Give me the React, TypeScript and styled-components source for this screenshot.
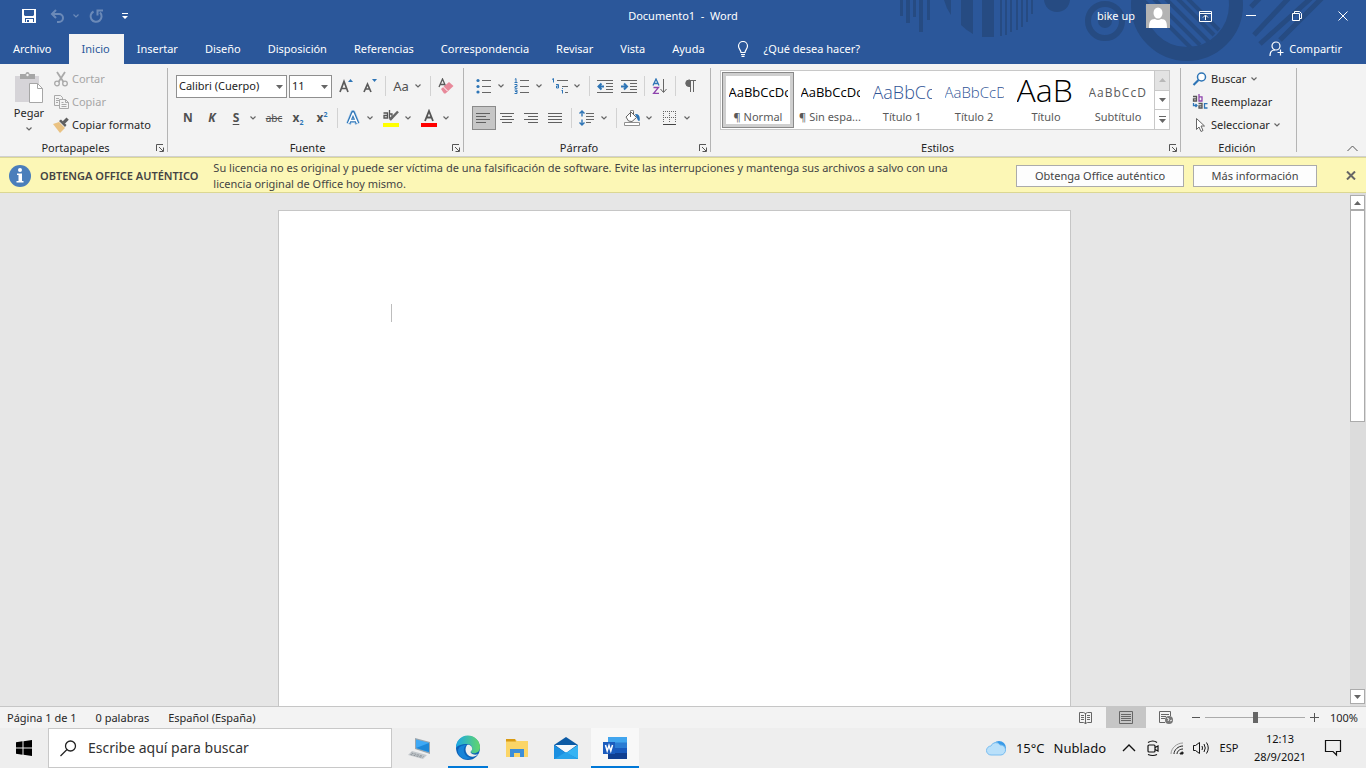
import React from "react";
import styled, { createGlobalStyle, css } from "styled-components";

const GlobalStyle = createGlobalStyle`
  * { box-sizing: border-box; }
  body { margin: 0; font-family: "Noto Sans", "Open Sans", sans-serif; font-size: 11px; line-height: 16px; color: #262626; }
  button, input, select { font: inherit; color: inherit; }
  button { background: none; border: 0; padding: 0; white-space: nowrap; }
  svg { display: block; flex: none; }
`;

const Window = styled.div`
  min-height: 100vh;
  display: flex;
  flex-direction: column;
  background: #e6e6e6;
`;

/* ---------- Title bar and tabs ---------- */
const Header = styled.header`
  position: relative;
  background: #2b579a;
  color: #fff;
  overflow: hidden;
`;
const HeaderArt = styled.svg`
  position: absolute;
  top: 0;
  right: 0;
`;
const TitleBar = styled.div`
  position: relative;
  display: grid;
  grid-template-columns: 1fr auto 1fr;
  align-items: center;
  height: 34px;
  padding-bottom: 2px;
`;
const QuickAccess = styled.div`
  display: flex;
  align-items: center;
  padding-left: 21px;
`;
const QuickButton = styled.button<{ $w: number; $dim?: boolean }>`
  width: ${(p) => p.$w}px;
  height: 24px;
  display: flex;
  align-items: center;
  opacity: ${(p) => (p.$dim ? 0.3 : 1)};
`;
const DocTitle = styled.span`
  white-space: pre;
`;
const Account = styled.div`
  display: flex;
  align-items: center;
  justify-content: flex-end;
`;
const UserName = styled.span`
  margin-right: 11px;
`;
const WindowButton = styled.button`
  width: 46px;
  height: 30px;
  display: grid;
  place-items: center;
`;
const WindowButtons = styled.div`
  display: flex;
  margin-left: 12px;
`;
const TabRow = styled.nav`
  position: relative;
  display: flex;
  height: 30px;
`;
const Tab = styled.button<{ $active?: boolean }>`
  padding: 0 14px 0 13px;
  height: 30px;
  ${(p) => p.$active && css`background: #f3f3f3; color: #2b579a;`}
  &:first-child { padding-right: 17px; }
`;
const TellMe = styled.button`
  display: flex;
  align-items: center;
  gap: 15px;
  margin-left: 18px;
`;
const Share = styled.button`
  display: flex;
  align-items: center;
  gap: 5px;
  margin-left: auto;
  margin-right: 24px;
`;

/* ---------- Ribbon ---------- */
const Ribbon = styled.section`
  display: flex;
  height: 93px;
  padding: 4px 0;
  background: #f3f3f3;
  border-bottom: 1px solid #d0d0d0;
`;
const Group = styled.section<{ $w: number }>`
  flex: none;
  width: ${(p) => p.$w}px;
  display: flex;
  flex-direction: column;
  border-right: 1px solid #b4b4b4;
`;
const GroupBody = styled.div`
  flex: 1;
  padding-left: 8px;
`;
const GroupFooter = styled.footer`
  display: flex;
  align-items: center;
  height: 16px;
  margin-bottom: -4px;
  padding-right: 3px;
`;
const GroupLabel = styled.span`
  flex: 1;
  text-align: center;
`;
const LauncherButton = styled.button`
  width: 13px;
  display: flex;
  justify-content: flex-end;
`;
const Clipboard = styled.div`
  display: flex;
`;
const PasteButton = styled.button`
  width: 42px;
  padding-top: 3px;
  display: flex;
  flex-direction: column;
  align-items: center;
`;
const PasteLabel = styled.span`
  line-height: 17px;
  margin-bottom: 5px;
`;
const CommandList = styled.div`
  display: flex;
  flex-direction: column;
  align-items: flex-start;
  padding-left: 3px;
`;
const Command = styled.button<{ $dim?: boolean }>`
  display: flex;
  align-items: center;
  gap: 3px;
  height: 23px;
  padding-bottom: 2px;
  color: ${(p) => (p.$dim ? "#a6a6a6" : "#262626")};
`;
const ToolRow = styled.div<{ $tall?: boolean }>`
  display: flex;
  align-items: center;
  height: ${(p) => (p.$tall ? 36 : 27)}px;
`;
const Tool = styled.button<{ $on?: boolean }>`
  width: 24px;
  height: 24px;
  display: grid;
  place-items: center;
  color: #505050;
  ${(p) => p.$on && css`background: #c6c6c6; border: 1px solid #8a8a8a;`}
`;
const Letter = styled.span<{ $kind?: string }>`
  font-size: 12px;
  font-weight: 700;
  ${(p) => p.$kind === "italic" && css`font-style: italic;`}
  ${(p) => p.$kind === "under" && css`text-decoration: underline; text-underline-offset: 2px;`}
  ${(p) => p.$kind === "strike" && css`font-size: 10px; font-weight: 400; text-decoration: line-through;`}
  ${(p) => p.$kind === "plain" && css`font-size: 13px; font-weight: 400;`}
  sub, sup { font-size: 7px; line-height: 0; color: #2e75b6; }
`;
const DropButton = styled.button`
  width: 14px;
  height: 24px;
  display: flex;
  align-items: center;
  padding-left: 1px;
`;
const Divider = styled.span`
  width: 1px;
  height: 20px;
  margin: 0 3px;
  background: #d2d2d2;
`;
const SelectBox = styled.label<{ $w: number }>`
  position: relative;
  flex: none;
  width: ${(p) => p.$w}px;
  height: 23px;
  margin-right: 2px;
  svg { position: absolute; right: 4px; top: 10px; }
`;
const Select = styled.select`
  appearance: none;
  width: 100%;
  height: 23px;
  padding: 0 2px;
  border: 1px solid #8f8f8f;
  border-radius: 0;
  background: #fff;
  color: #222;
`;
const Gallery = styled.div`
  display: flex;
  height: 60px;
  margin: 2px 10px 0 1px;
  border: 1px solid #c8c8c8;
  background: #fff;
`;
const StyleCard = styled.button<{ $on?: boolean }>`
  width: 72px;
  height: 56px;
  margin-top: 1px;
  display: flex;
  flex-direction: column;
  align-items: center;
  overflow: hidden;
  &:first-child { margin-left: 1px; }
  ${(p) => p.$on && css`box-shadow: inset 0 0 0 1px #8a8a8a, inset 0 0 0 4px #cfcfcf;`}
`;
const Sample = styled.span<{ $size: number; $color: string; $light?: boolean; $spaced?: boolean }>`
  width: 59px;
  height: 29px;
  margin-top: 6px;
  line-height: ${(p) => (p.$size > 20 ? 24 : 29)}px;
  overflow: hidden;
  text-align: left;
  font-family: "Open Sans", sans-serif;
  font-size: ${(p) => p.$size}px;
  font-weight: ${(p) => (p.$light ? 300 : 400)};
  color: ${(p) => p.$color};
  letter-spacing: ${(p) => (p.$spaced ? 1 : 0)}px;
`;
const StyleName = styled.span`
  margin-top: 2px;
  line-height: 15px;
  color: #595959;
`;
const GalleryScroll = styled.div`
  display: flex;
  flex-direction: column;
  width: 15px;
  margin-left: auto;
  border-left: 1px solid #c8c8c8;
`;
const GalleryButton = styled.button<{ $off?: boolean }>`
  flex: 1;
  display: grid;
  place-items: center;
  background: ${(p) => (p.$off ? "#e3e3e3" : "#fff")};
  & + & { border-top: 1px solid #c8c8c8; }
`;
const Collapse = styled.button`
  align-self: flex-end;
  margin-left: auto;
  margin-right: 8px;
`;

/* ---------- License notice ---------- */
const Notice = styled.aside`
  display: flex;
  align-items: center;
  height: 36px;
  padding: 1px 10px 0 9px;
  background: #fcf7b6;
  border-top: 1px solid #dbd793;
  border-bottom: 1px solid #dbd793;
  color: #444;
`;
const NoticeTitle = styled.strong`
  margin: 0 15px 0 9px;
  font-weight: 600;
  white-space: nowrap;
`;
const NoticeText = styled.p`
  flex: 1;
  max-width: 755px;
  margin: 0;
`;
const NoticeActions = styled.div`
  display: flex;
  align-items: center;
  margin-left: auto;
`;
const NoticeButton = styled.button<{ $w: number }>`
  width: ${(p) => p.$w}px;
  height: 22px;
  margin-right: 9px;
  border: 1px solid #ababab;
  background: #fdfdfd;
`;
const NoticeClose = styled.button`
  margin-left: 20px;
`;

/* ---------- Document ---------- */
const Workspace = styled.main`
  flex: 1;
  display: flex;
  min-height: 0;
`;
const Desk = styled.div`
  flex: 1;
  display: flex;
  justify-content: center;
  padding: 17px 1px 0 0;
`;
const Sheet = styled.article`
  width: 793px;
  padding: 93px 112px 0;
  background: #fff;
  border: 1px solid #c6c6c6;
  border-bottom: 0;
`;
const Caret = styled.div`
  width: 1px;
  height: 18px;
  background: #bdbdbd;
`;
const Scrollbar = styled.div`
  width: 16px;
  display: flex;
  flex-direction: column;
  padding: 2px 1px 2px 0;
  background: #dcdcdc;
`;
const ScrollButton = styled.button`
  height: 15px;
  display: grid;
  place-items: center;
  border: 1px solid #ababab;
  background: #fff;
`;
const ScrollThumb = styled.div`
  height: 212px;
  margin-bottom: auto;
  border: 1px solid #ababab;
  background: #fff;
`;

/* ---------- Status bar ---------- */
const StatusBar = styled.footer`
  display: flex;
  align-items: center;
  height: 22px;
  padding: 0 8px 0 7px;
  border-top: 1px solid #c6c6c6;
  background: #f3f3f3;
`;
const StatusItem = styled.span`
  margin-right: 19px;
`;
const ViewButton = styled.button<{ $on?: boolean }>`
  width: 40px;
  height: 21px;
  display: grid;
  place-items: center;
  background: ${(p) => (p.$on ? "#c6c6c6" : "transparent")};
`;
const Views = styled.div`
  display: flex;
  margin-left: auto;
`;
const ZoomControl = styled.div`
  display: flex;
  align-items: center;
  gap: 5px;
  margin-left: 5px;
`;
const ZoomRange = styled.input`
  appearance: none;
  width: 100px;
  height: 12px;
  margin: 0;
  background: linear-gradient(#ababab, #ababab) center / 100% 1px no-repeat;
  &::-webkit-slider-thumb { appearance: none; width: 5px; height: 11px; background: #666; }
`;
const ZoomValue = styled.button`
  width: 34px;
  text-align: right;
`;

/* ---------- Taskbar ---------- */
const Taskbar = styled.footer`
  display: flex;
  align-items: center;
  height: 40px;
  background: #eeeeee;
  color: #111;
`;
const StartButton = styled.button`
  width: 48px;
  height: 40px;
  display: grid;
  place-items: center;
`;
const SearchBox = styled.label`
  display: flex;
  align-items: center;
  gap: 11px;
  width: 344px;
  height: 40px;
  padding: 0 11px;
  border: 1px solid #c8c8c8;
  background: #fff;
`;
const SearchInput = styled.input`
  flex: 1;
  min-width: 0;
  padding: 0;
  border: 0;
  outline: 0;
  font-size: 14px;
  line-height: 20px;
  background: none;
  &::placeholder { color: #333; opacity: 1; }
`;
const Pinned = styled.div`
  display: flex;
  margin-left: 3px;
`;
const AppButton = styled.button<{ $state?: "open" | "active" }>`
  width: 48px;
  height: 40px;
  margin-right: 1px;
  display: grid;
  place-items: center;
  background: ${(p) => (p.$state === "active" ? "#f8f8f8" : "transparent")};
  ${(p) => p.$state === "active" && css`border-top: 2px solid transparent; border-bottom: 2px solid #0078d7;`}
  ${(p) => p.$state === "open" && css`
    background: linear-gradient(#0078d7, #0078d7) bottom / 40px 2px no-repeat;
  `}
`;
const Tray = styled.div`
  display: flex;
  align-items: center;
  margin-left: auto;
  padding-right: 24px;
`;
const Weather = styled.button`
  display: flex;
  align-items: center;
  gap: 9px;
  margin-right: 15px;
  font-size: 13px;
`;
const TrayIcons = styled.div`
  display: flex;
  align-items: center;
  gap: 7px;
`;
const Language = styled.button`
  width: 38px;
  margin-right: 2px;
`;
const Clock = styled.time`
  width: 60px;
  line-height: 18px;
  text-align: center;
  margin-right: 14px;
`;

/* ---------- Icons ---------- */
const Chevron = ({ color = "#666" }: { color?: string }) => (
  <svg width="8" height="6" viewBox="0 0 8 6" fill="none" stroke={color} strokeWidth="1.2"><path d="M1.5 1.5 4 4l2.500-2.500" /></svg>
);
const Triangle = ({ up, color = "#666" }: { up?: boolean; color?: string }) => (
  <svg width="7" height="4" viewBox="0 0 7 4" fill={color}><path d={up ? "M0 4h7L3.500 0z" : "M0 0h7L3.500 4z"} /></svg>
);
const Launcher = () => (
  <svg width="8" height="8" viewBox="0 0 8 8" fill="none" stroke="#555"><path d="M.5 7V.5H7M3 3l4 4M7.500 3.500v4h-4" /></svg>
);
const Svg16 = ({ children, w = 16, h = 16 }: { children: React.ReactNode; w?: number; h?: number }) => (
  <svg width={w} height={h} viewBox={`0 0 ${w} ${h}`} fill="none" stroke="#666">{children}</svg>
);
const SaveIcon = () => (
  <svg width="16" height="16" viewBox="0 0 16 16"><path d="M1 1h14v14H1z" fill="#fff" /><path d="M3 2h10v5l-1 1H4L3 7zM4 10h9v4h-1v-3H5v3H4z" fill="#2b579a" /><path d="M6 12h2v2H6z" fill="#2b579a" /></svg>
);
const AlignIcon = ({ rows }: { rows: [number, number][] }) => (
  <Svg16>
    {rows.map(([x, w], i) => <path key={i} d={`M${x} ${3.5 + i * 3}h${w}`} stroke="#606060" />)}
  </Svg16>
);
const ListIcon = () => (
  <Svg16>
    <path d="M6 2.500h9M6 8.500h9M6 14.500h9" />
    <g fill="#2e75b6" stroke="none"><circle cx="2" cy="2.500" r="1.600" /><circle cx="2" cy="8.500" r="1.600" /><circle cx="2" cy="14" r="1.600" /></g>
  </Svg16>
);
const NumberIcon = () => (
  <Svg16>
    <path d="M6 2.500h9M6 8.500h9M6 14.500h9" />
    <path d="M.8 1.500 2 .5V4.500M.5 4.500H3.500M.5 6.500h2.500v2h-2v1.800h2.500M.5 12h2.500v1.500h-2M3 13.500V15.500H.5" stroke="#2e75b6" />
  </Svg16>
);
const MultiIcon = () => (
  <Svg16>
    <path d="M5 2.500h11M10 8.500h6M13 14.500h3" />
    <path d="M0 1.500 1.500.5v4M4 6.500h2.500v3.500H4.500v-2h2M10.500 10v1M10.500 12v3.500M9.500 12.500h1" stroke="#2e75b6" />
  </Svg16>
);
const IndentIcon = ({ out }: { out?: boolean }) => (
  <Svg16>
    <path d="M0 2.500h16M9 5.500h7M9 8.500h7M9 11.500h7M0 14.500h16" />
    <path d={out ? "M7 8.500H1.500M4.500 5.500l-3 3 3 3" : "M0 8.500h6M3 5.500l3 3-3 3"} stroke="#2e75b6" strokeWidth="2" />
  </Svg16>
);
const GrowIcon = ({ down }: { down?: boolean }) => (
  <svg width="16" height="16" viewBox="0 0 16 16">
    <path d={down ? "M2 14 5.500 6 9 14M3.500 11h4" : "M2 14 6 3.500 10 14M3.500 10.500h5"} fill="none" stroke="#5a5a5a" strokeWidth="1.700" />
    <path d={down ? "M10 1h5l-2.500 3z" : "M10 4h5l-2.500-3z"} fill="#2e75b6" />
  </svg>
);
const PasteIcon = () => (
  <svg width="30" height="33" viewBox="0 0 30 33">
    <path d="M1 5h24v26H1z" fill="#d6d4d8" /><path d="M6 3h5.500a2 2 0 0 1 4 0H21v5H6z" fill="#a6a6a6" /><circle cx="13.500" cy="4" r="1.200" fill="#f3f3f3" />
    <path d="M15.500 12.500h8l5 5v14h-13z" fill="#fff" stroke="#a6a6a6" /><path d="M23.500 12.500v5h5" fill="none" stroke="#a6a6a6" />
  </svg>
);
const CutIcon = () => (
  <Svg16><g stroke="#a9a9a9" strokeWidth="1.800"><path d="m4 1 6.500 10M12 1 5.500 11" /><circle cx="4" cy="12.500" r="2.300" strokeWidth="1.300" /><circle cx="12" cy="12.500" r="2.300" strokeWidth="1.300" /></g></Svg16>
);
const CopyIcon = () => (
  <Svg16><g stroke="#a9a9a9" fill="#f3f3f3"><path d="M1.500 1.500h6l2 2v8h-8zM3 4.500h3M3 6.500h3M3 8.500h2" /><path d="M6.500 5.500h6l3 3v6h-9zM12.500 5.500v3h3M8.500 8.500h2M8.500 10.500h5M8.500 12.500h5" /></g></Svg16>
);
const BrushIcon = () => (
  <svg width="16" height="16" viewBox="0 0 16 16"><path d="M0 7 6 5l6 6-5 5z" fill="#eac282" /><path d="m6 4 2-1.500 5.500 5.500-1.500 2z" fill="#5f5f5f" /><path d="m9.500 4.500 4-4 2.300 2.300-4 4z" fill="#5f5f5f" /></svg>
);
const EraserIcon = () => (
  <svg width="16" height="16" viewBox="0 0 16 16"><path d="M1 9 4.500 1 8 9M2 6.500h5" fill="none" stroke="#5a5a5a" strokeWidth="1.300" /><path d="m3 11 8-7 4.500 4-8 7.500H6z" fill="#e8899a" /><path d="m5.500 9 4 4" stroke="#fff" /></svg>
);
const EffectIcon = () => (
  <svg width="16" height="16" viewBox="0 0 16 16" fill="none" strokeLinejoin="round"><path d="M3.500 14 8 2.500 12.500 14M5 10.500h6" stroke="#a9cbea" strokeWidth="5" /><path d="M3.500 13.500 8 2.500l4.500 11M5 10.500h6" stroke="#2e75b6" strokeWidth="3.600" /><path d="M3.500 13.500 8 3l4.500 10.500M5 10.500h6" stroke="#fff" strokeWidth="1.500" /></svg>
);
const HighlightIcon = () => (
  <svg width="16" height="18" viewBox="0 0 16 18" fill="none"><path d="M.5 4h4v5H1V6.500h3.500M6.500 1v8H9V5H6.500" stroke="#555" strokeWidth="1.300" /><path d="m7 11 8-8.500" stroke="#666" strokeWidth="2.500" /><path d="M0 14h16v4H0z" fill="#ff0" /></svg>
);
const FontColorIcon = () => (
  <svg width="16" height="18" viewBox="0 0 16 18" fill="none"><path d="M4 12 8 2l4 10M5.500 8.500h5" stroke="#555" strokeWidth="1.800" /><path d="M0 14h16v4H0z" fill="red" /></svg>
);
const SortIcon = () => (
  <Svg16><path d="M1 7.500 4 1l3 6.500M2 5.500h4" stroke="#2e75b6" strokeWidth="1.300" /><path d="M1.500 9.500h5l-5 6h5.500" stroke="#8e44ad" strokeWidth="1.300" /><path d="M11.500 1v13M8.500 11l3 3.500 3-3.500" /></Svg16>
);
const PilcrowIcon = () => (
  <Svg16><path d="M7.500 2v12M10.500 2v12M13 2.500H6" /><path d="M7 2H6a3 3 0 0 0 0 6.500h1z" fill="#666" /></Svg16>
);
const SpacingIcon = () => (
  <Svg16><path d="M7 3.500h8M7 6.500h8M7 9.500h8M7 12.500h5" /><path d="M3 1.500v5M.5 3.500 3 1l2.500 2.500M3 14.500v-5M.5 12.500 3 15l2.500-2.500" stroke="#2e75b6" strokeWidth="1.400" /></Svg16>
);
const BucketIcon = () => (
  <Svg16><path d="m2 7 5-5 5.500 5.500-4.500 4-3.500-.5zM6.500 7V1.500a1.500 1.500 0 0 1 3 0V4" fill="#fff" /><path d="M11 4c4-.5 5.500 3 4.500 7-2 0-2-2-3-4z" fill="#2e75b6" stroke="none" /><path d="M.5 12.500h15v3H.5z" fill="#fff" stroke="#909090" /></Svg16>
);
const BorderIcon = () => (
  <Svg16><path d="M1.500 1v12M7.500 1v12M13.500 1v12M1 1.500h13M1 7.500h13" strokeDasharray="1 1" /><path d="M1 14.500h13" stroke="#444" /></Svg16>
);
const FindIcon = () => (
  <Svg16><circle cx="9.500" cy="6" r="4" stroke="#2e75b6" strokeWidth="1.500" fill="#fff" /><path d="m6.500 9-5 5" stroke="#2e75b6" strokeWidth="2.200" /></Svg16>
);
const ReplaceIcon = () => (
  <Svg16><g strokeWidth="1.300"><path d="M1 2.500h3.500V7H1.500V4.800H4.500" stroke="#555" /><path d="M7 0v7h3V2.800H7" stroke="#8e44ad" /><path d="M6.500 9.500H10V14H7V11.800h3" stroke="#555" /><path d="M15.500 9.700h-3V14h3M1.500 9v2.500H5M3.500 10 5 11.500 3.500 13" stroke="#2e75b6" /></g></Svg16>
);
const PointerIcon = () => (
  <Svg16><path d="M4.500 1.500v11l2.500-2.500 2 4.500 2-1-2-4.500h3.500z" fill="#fff" /></Svg16>
);

const RibbonGroup = ({ label, width, launcher, children }: { label: string; width: number; launcher?: boolean; children: React.ReactNode }) => (
  <Group $w={width} aria-label={label}>
    <GroupBody>{children}</GroupBody>
    <GroupFooter>
      <GroupLabel>{label}</GroupLabel>
      {launcher && <LauncherButton aria-label={`Opciones de ${label}`}><Launcher /></LauncherButton>}
    </GroupFooter>
  </Group>
);
const Drop = ({ label }: { label: string }) => <DropButton aria-label={label}><Chevron /></DropButton>;

const tabs = ["Archivo", "Inicio", "Insertar", "Diseño", "Disposición", "Referencias", "Correspondencia", "Revisar", "Vista", "Ayuda"];
const styleCards = [
  { name: "¶ Normal", sample: "AaBbCcDc", size: 13, color: "#000", on: true },
  { name: "¶ Sin espa...", sample: "AaBbCcDc", size: 13, color: "#000" },
  { name: "Título 1", sample: "AaBbCc", size: 18, color: "#2f5496", light: true },
  { name: "Título 2", sample: "AaBbCcD", size: 15, color: "#2f5496", light: true },
  { name: "Título", sample: "AaB", size: 32, color: "#000", light: true },
  { name: "Subtítulo", sample: "AaBbCcD", size: 12, color: "#5a5a5a", spaced: true },
];

export default function App() {
  return (
    <Window>
      <GlobalStyle />
      <Header>
        <HeaderArt width="470" height="64" viewBox="896 0 470 64" fill="#264b82" aria-hidden="true">
          <path d="M900 0h3v16h-3zM906 0h4v23h-4zM913 0h3v17h-3zM919 0h4v32h-4zM927 0h3v20h-3zM944 0h7v15q-5-7-7-15zM961 0h12v34q-7-4-12-9zM982 0h12v37h-12zM1000 0h2v36h-2zM1005 0h2v35h-2zM1010 0h2v32h-2zM1016 0h2v30h-2zM1021 0h2v27h-2zM1026 0h2v22h-2zM1031 0h2v14h-2z" />
          <circle cx="1057" cy="-1" r="13" />
          <circle cx="1105" cy="21" r="17" fill="none" stroke="#264b82" strokeWidth="6" /><circle cx="1105" cy="21" r="7" />
          <circle cx="1187" cy="5" r="49" fill="none" stroke="#264b82" strokeWidth="14" />
          <g stroke="#264b82" strokeWidth="4"><path d="m1143 0 48 48M1152-3l48 48M1161-6l49 49M1170-9l44 44M1180-9l39 39" /><path d="m1285-28-34 35M1302-16l-48 51M1320-10l-60 54M1335-15l-55 55" strokeWidth="5" /></g>
        </HeaderArt>
        <TitleBar>
          <QuickAccess>
            <QuickButton $w={29} aria-label="Guardar"><SaveIcon /></QuickButton>
            <QuickButton $w={22} $dim aria-label="Deshacer"><svg width="16" height="14" viewBox="0 0 16 14" fill="none" stroke="#fff" strokeWidth="2"><path d="M6 1 2 5l4 4M2 5h7a4 4 0 0 1 0 8H7" /></svg></QuickButton>
            <QuickButton $w={17} $dim aria-label="Lista de deshacer"><Chevron color="#fff" /></QuickButton>
            <QuickButton $w={32} $dim aria-label="Repetir"><svg width="15" height="15" viewBox="0 0 15 15" fill="none" stroke="#fff" strokeWidth="2"><path d="M4.500 2.500A5.500 5.500 0 1 0 11 3.500M8.500 6.500V1.500H14" /></svg></QuickButton>
            <QuickButton $w={10} aria-label="Personalizar barra"><svg width="8" height="8" viewBox="0 0 8 8" fill="#fff"><path d="M1 1h6v1H1zM1 4h6L4 7z" /></svg></QuickButton>
          </QuickAccess>
          <DocTitle>{"Documento1  -  Word"}</DocTitle>
          <Account>
            <UserName>bike up</UserName>
            <svg width="24" height="24" viewBox="0 0 24 24"><path d="M0 0h24v24H0z" fill="#b3b3b3" /><ellipse cx="12" cy="9" rx="4.500" ry="5.500" fill="#fff" /><path d="M3 24c0-6 1-9 6-9q3 2 6 0c5 0 6 3 6 9z" fill="#fff" /></svg>
            <WindowButtons>
              <WindowButton aria-label="Opciones de la cinta"><svg width="13" height="11" viewBox="0 0 13 11" fill="none" stroke="#fff"><path d="M.5.5h12v10H.5zM.5 2.500h12M6.500 9V4.500M4 6.500l2.500-2.500L9 6.500" /></svg></WindowButton>
              <WindowButton aria-label="Minimizar"><svg width="10" height="2" viewBox="0 0 10 2"><path d="M0 0h10v1H0z" fill="#fff" /></svg></WindowButton>
              <WindowButton aria-label="Restaurar"><svg width="10" height="10" viewBox="0 0 10 10" fill="none" stroke="#fff"><path d="M.5 2.500h7v7h-7zM2.500 2.500v-2h5l2 2v5h-2" /></svg></WindowButton>
              <WindowButton aria-label="Cerrar"><svg width="10" height="10" viewBox="0 0 10 10" stroke="#fff"><path d="m.5.5 9 9M9.500.5l-9 9" /></svg></WindowButton>
            </WindowButtons>
          </Account>
        </TitleBar>
        <TabRow>
          {tabs.map((t) => <Tab key={t} $active={t === "Inicio"}>{t}</Tab>)}
          <TellMe>
            <svg width="12" height="16" viewBox="0 0 12 16" fill="none" stroke="#fff" strokeWidth="1.200"><path d="M4 11.500C4 9 1.500 8 1.500 5a4.500 4.500 0 0 1 9 0c0 3-2.500 4-2.500 6.500zM4 13.500h4M4.500 15.300h3" /></svg>
            ¿Qué desea hacer?
          </TellMe>
          <Share>
            <svg width="15" height="16" viewBox="0 0 15 16" fill="none" stroke="#fff" strokeWidth="1.200"><circle cx="7" cy="5" r="4" /><path d="M1 15c0-4 2-6 5-6M11.500 8.500v6M8.500 11.500h6" /></svg>
            Compartir
          </Share>
        </TabRow>
      </Header>

      <Ribbon>
        <RibbonGroup label="Portapapeles" width={168} launcher>
          <Clipboard>
            <PasteButton><PasteIcon /><PasteLabel>Pegar</PasteLabel><Chevron /></PasteButton>
            <CommandList>
              <Command $dim><CutIcon />Cortar</Command>
              <Command $dim><CopyIcon />Copiar</Command>
              <Command><BrushIcon />Copiar formato</Command>
            </CommandList>
          </Clipboard>
        </RibbonGroup>
        <RibbonGroup label="Fuente" width={296} launcher>
          <ToolRow $tall>
            <SelectBox $w={111}><Select aria-label="Fuente"><option>Calibri (Cuerpo)</option></Select><Triangle /></SelectBox>
            <SelectBox $w={43}><Select aria-label="Tamaño de fuente"><option>11</option></Select><Triangle /></SelectBox>
            <Tool aria-label="Aumentar tamaño"><GrowIcon /></Tool>
            <Tool aria-label="Disminuir tamaño"><GrowIcon down /></Tool>
            <Divider />
            <Tool><Letter $kind="plain">Aa</Letter></Tool><Drop label="Cambiar mayúsculas" />
            <Divider />
            <Tool aria-label="Borrar formato"><EraserIcon /></Tool>
          </ToolRow>
          <ToolRow>
            <Tool><Letter>N</Letter></Tool>
            <Tool><Letter $kind="italic">K</Letter></Tool>
            <Tool><Letter $kind="under">S</Letter></Tool><Drop label="Tipo de subrayado" />
            <Tool><Letter $kind="strike">abc</Letter></Tool>
            <Tool><Letter>x<sub>2</sub></Letter></Tool>
            <Tool><Letter>x<sup>2</sup></Letter></Tool>
            <Divider />
            <Tool aria-label="Efectos de texto"><EffectIcon /></Tool><Drop label="Más efectos" />
            <Tool aria-label="Resaltado"><HighlightIcon /></Tool><Drop label="Más resaltados" />
            <Tool aria-label="Color de fuente"><FontColorIcon /></Tool><Drop label="Más colores" />
          </ToolRow>
        </RibbonGroup>
        <RibbonGroup label="Párrafo" width={247} launcher>
          <ToolRow $tall>
            <Tool aria-label="Viñetas"><ListIcon /></Tool><Drop label="Más viñetas" />
            <Tool aria-label="Numeración"><NumberIcon /></Tool><Drop label="Más numeración" />
            <Tool aria-label="Lista multinivel"><MultiIcon /></Tool><Drop label="Más listas" />
            <Divider />
            <Tool aria-label="Disminuir sangría"><IndentIcon out /></Tool>
            <Tool aria-label="Aumentar sangría"><IndentIcon /></Tool>
            <Divider />
            <Tool aria-label="Ordenar"><SortIcon /></Tool>
            <Divider />
            <Tool aria-label="Mostrar todo"><PilcrowIcon /></Tool>
          </ToolRow>
          <ToolRow>
            <Tool $on aria-label="Alinear a la izquierda"><AlignIcon rows={[[0, 14], [0, 10], [0, 14], [0, 10]]} /></Tool>
            <Tool aria-label="Centrar"><AlignIcon rows={[[0, 14], [2, 10], [0, 14], [2, 10]]} /></Tool>
            <Tool aria-label="Alinear a la derecha"><AlignIcon rows={[[0, 14], [4, 10], [0, 14], [4, 10]]} /></Tool>
            <Tool aria-label="Justificar"><AlignIcon rows={[[0, 14], [0, 14], [0, 14], [0, 14]]} /></Tool>
            <Divider />
            <Tool aria-label="Espaciado"><SpacingIcon /></Tool><Drop label="Más espaciado" />
            <Divider />
            <Tool aria-label="Sombreado"><BucketIcon /></Tool><Drop label="Más sombreados" />
            <Tool aria-label="Bordes"><BorderIcon /></Tool><Drop label="Más bordes" />
          </ToolRow>
        </RibbonGroup>
        <RibbonGroup label="Estilos" width={470} launcher>
          <Gallery>
            {styleCards.map((s) => (
              <StyleCard key={s.name} $on={s.on}>
                <Sample $size={s.size} $color={s.color} $light={s.light} $spaced={s.spaced}>{s.sample}</Sample>
                <StyleName>{s.name}</StyleName>
              </StyleCard>
            ))}
            <GalleryScroll>
              <GalleryButton $off aria-label="Subir"><Triangle up color="#b8b8b8" /></GalleryButton>
              <GalleryButton aria-label="Bajar"><Triangle /></GalleryButton>
              <GalleryButton aria-label="Más"><svg width="7" height="7" viewBox="0 0 7 7" fill="#666"><path d="M0 0h7v1H0zM0 3h7L3.500 7z" /></svg></GalleryButton>
            </GalleryScroll>
          </Gallery>
        </RibbonGroup>
        <RibbonGroup label="Edición" width={116}>
          <CommandList>
            <Command><FindIcon />Buscar<Drop label="Opciones de búsqueda" /></Command>
            <Command><ReplaceIcon />Reemplazar</Command>
            <Command><PointerIcon />Seleccionar<Chevron /></Command>
          </CommandList>
        </RibbonGroup>
        <Collapse aria-label="Contraer la cinta"><svg width="11" height="7" viewBox="0 0 11 7" fill="none" stroke="#555"><path d="m.5 6 5-5 5 5" /></svg></Collapse>
      </Ribbon>

      <Notice>
        <svg width="22" height="22" viewBox="0 0 22 22"><circle cx="11" cy="11" r="11" fill="#4a7ebb" /><circle cx="11" cy="5" r="2" fill="#fff" /><path d="M8 8.500h5V16h1.500v1.500h-7V16H9.500v-6H8z" fill="#fff" /></svg>
        <NoticeTitle>OBTENGA OFFICE AUTÉNTICO</NoticeTitle>
        <NoticeText>Su licencia no es original y puede ser víctima de una falsificación de software. Evite las interrupciones y mantenga sus archivos a salvo con una licencia original de Office hoy mismo.</NoticeText>
        <NoticeActions>
          <NoticeButton $w={168}>Obtenga Office auténtico</NoticeButton>
          <NoticeButton $w={124}>Más información</NoticeButton>
          <NoticeClose aria-label="Cerrar aviso"><svg width="10" height="9" viewBox="0 0 10 9" stroke="#666" strokeWidth="2"><path d="m1 .5 8 8M9 .5l-8 8" /></svg></NoticeClose>
        </NoticeActions>
      </Notice>

      <Workspace>
        <Desk><Sheet><Caret /></Sheet></Desk>
        <Scrollbar>
          <ScrollButton aria-label="Desplazar arriba"><Triangle up /></ScrollButton>
          <ScrollThumb />
          <ScrollButton aria-label="Desplazar abajo"><Triangle /></ScrollButton>
        </Scrollbar>
      </Workspace>

      <StatusBar>
        <StatusItem>Página 1 de 1</StatusItem>
        <StatusItem>0 palabras</StatusItem>
        <StatusItem>Español (España)</StatusItem>
        <Views>
          <ViewButton aria-label="Modo de lectura"><Svg16 h={14}><path d="M1.500 1.500h4l2 1 2-1h4v10h-4l-2 1-2-1h-4zM7.500 2v11M3 4.500h3M3 6.500h3M3 8.500h3M9 4.500h3M9 6.500h3M9 8.500h3" /></Svg16></ViewButton>
          <ViewButton $on aria-label="Diseño de impresión"><Svg16 h={14}><path d="M1.500.5h13v12h-13zM3 3.500h10M3 5.500h10M3 7.500h10M3 9.500h10" /></Svg16></ViewButton>
          <ViewButton aria-label="Diseño web"><Svg16 h={14}><path d="M7 11.500H1.500v-11h11V5M3 3.500h8M3 5.500h5M3 7.500h4" /><circle cx="11" cy="9" r="4" fill="#777" stroke="none" /><path d="m9 7 2 1-1 2M12 10l2-1" stroke="#f3f3f3" /></Svg16></ViewButton>
        </Views>
        <ZoomControl>
          <button aria-label="Alejar"><svg width="9" height="9" viewBox="0 0 9 9" stroke="#555"><path d="M1 4.500h8" /></svg></button>
          <ZoomRange type="range" aria-label="Zoom" min={10} max={190} defaultValue={100} />
          <button aria-label="Acercar"><svg width="9" height="9" viewBox="0 0 9 9" stroke="#555"><path d="M0 4.500h9M4.500 0v9" /></svg></button>
          <ZoomValue>100%</ZoomValue>
        </ZoomControl>
      </StatusBar>

      <Taskbar>
        <StartButton aria-label="Inicio"><svg width="16" height="16" viewBox="0 0 16 16"><path d="M0 2.200 6.500 1.300v6.200H0zM7.500 1.200 16 0v7.500H7.500zM0 8.500h6.500v6.200L0 13.800zM7.500 8.500H16V16l-8.500-1.200z" /></svg></StartButton>
        <SearchBox>
          <svg width="17" height="17" viewBox="0 0 17 17" fill="none" stroke="#222" strokeWidth="1.300"><circle cx="10.500" cy="6" r="5" /><path d="M7 9.500.5 16" /></svg>
          <SearchInput placeholder="Escribe aquí para buscar" aria-label="Buscar" />
        </SearchBox>
        <Pinned>
          <AppButton aria-label="Este equipo"><svg width="24" height="24" viewBox="0 0 24 24"><path d="m8 2 15 4v12L8 13z" fill="#9aa5ad" /><path d="m9 3.500 13 3.300v9.500L9 12z" fill="#3fa9f5" /><path d="m9 12 13-5v9z" fill="#1e88d8" /><path d="m5 15 15 4-4 4-15-4z" fill="#c3c8cc" /><path d="m4.500 17 12 3.500M3.500 18.500l12 3" stroke="#8c9399" strokeDasharray="2 1" /></svg></AppButton>
          <AppButton $state="open" aria-label="Edge"><svg width="26" height="26" viewBox="0 0 26 26"><defs><linearGradient id="edgeTop"><stop stopColor="#1aa7e8" /><stop offset="1" stopColor="#62d66a" /></linearGradient></defs><circle cx="13" cy="13" r="12" fill="#0d62b8" /><path d="M1 13A12 12 0 0 1 25 12c0 5-4 7-8 6-2-1-1-2 0-3 1-3-1-6-5-6C6 9 2 11 1 13z" fill="url(#edgeTop)" /><path d="M12 10c3-1 6 2 5 5-1 1-2 2-1 3 2 2 5 2 7 1-3 4-9 3-11 0s-2-6 0-9z" fill="#eee" /><path d="M9 13c-1 5 2 9 7 10-6 3-13-1-13-7 0-4 4-6 8-6z" fill="#1683d8" /></svg></AppButton>
          <AppButton aria-label="Explorador de archivos"><svg width="22" height="20" viewBox="0 0 22 20"><path d="M0 1h9l2 2h11v16H0z" fill="#fbd567" /><path d="M0 1h9l1 2.500H0z" fill="#d99a12" /><path d="M4 11h14v8h-4v-4H8v4H4z" fill="#3c8ed8" /></svg></AppButton>
          <AppButton aria-label="Correo"><svg width="26" height="24" viewBox="0 0 26 24"><path d="M1 9 13 1l12 8v14H1z" fill="#0b5aa5" /><path d="M2 9h22L13 17z" fill="#f4f8fb" /><path d="m1 9 12 8-12 6z" fill="#1b8fe0" /><path d="m25 9-12 8 12 6z" fill="#36b3f3" /><path d="m1 23 12-7 12 7z" fill="#28a3ea" /></svg></AppButton>
          <AppButton $state="active" aria-label="Word"><svg width="26" height="22" viewBox="0 0 26 22"><path d="M6 0h19v6H6z" fill="#41a5ee" /><path d="M6 5.500h19V11H6z" fill="#2b7cd3" /><path d="M6 11h19v5.500H6z" fill="#185abd" /><path d="M6 16h19v6H6z" fill="#103f91" /><path d="M1 5h12v12H1z" fill="#1b5cbe" /><path d="m3.500 8 1.700 6L7 8.500 8.800 14l1.700-6" fill="none" stroke="#fff" strokeWidth="1.500" /></svg></AppButton>
        </Pinned>
        <Tray>
          <Weather>
            <svg width="21" height="18" viewBox="0 0 21 18"><circle cx="13" cy="9" r="7" fill="#3a9be8" /><path d="M5 16a4.500 4.500 0 0 1 0-9 5 5 0 0 1 9-1 5 5 0 0 1 1 10z" fill="#b9e0fa" stroke="#79bdf0" /></svg>
            <span>15°C</span><span>Nublado</span>
          </Weather>
          <TrayIcons>
            <button aria-label="Iconos ocultos"><svg width="16" height="16" viewBox="0 0 16 16" fill="none" stroke="#111" strokeWidth="1.400"><path d="m2 11 6-6 6 6" /></svg></button>
            <button aria-label="Reunirse"><svg width="18" height="18" viewBox="0 0 18 18" fill="none" stroke="#111" strokeWidth="1.200"><rect x="4" y="6" width="7" height="7" rx="1" /><path d="M11 8.500 14 7v5l-3-1.500M4 3.500q5-3 9 0M4 15.500q5 2 9 0" /></svg></button>
            <button aria-label="Red"><svg width="16" height="16" viewBox="0 0 16 16" fill="none" stroke="#222"><path d="M2 14C2 8 8 3 14 3" stroke="#999" /><path d="M5 14c0-4 4-8 9-8M8 14c0-3 3-5 6-5" /><path d="M11 14c0-1 1-2 3-2v2z" fill="#111" /></svg></button>
            <button aria-label="Volumen"><svg width="18" height="16" viewBox="0 0 18 16" fill="none" stroke="#111"><path d="M1.500 5.500h2l4-3v11l-4-3h-2zM10 6q1 2 0 4M12 4q2.500 4 0 8M14.500 2.500q3.500 5.500 0 11" /></svg></button>
          </TrayIcons>
          <Language>ESP</Language>
          <Clock>12:13<br />28/9/2021</Clock>
          <button aria-label="Notificaciones"><svg width="18" height="18" viewBox="0 0 18 18" fill="none" stroke="#111" strokeWidth="1.200"><path d="M1.500 1.500h15v11h-4v3.500L9 12.500H1.500z" /></svg></button>
        </Tray>
      </Taskbar>
    </Window>
  );
}
